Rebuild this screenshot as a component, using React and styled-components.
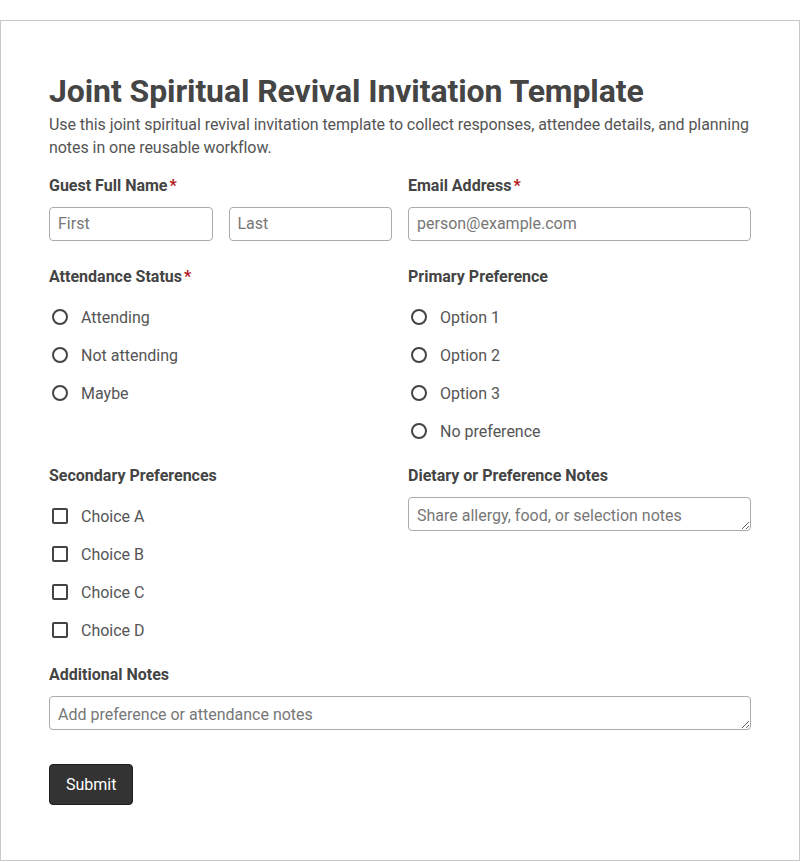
import React from "react";
import styled, { createGlobalStyle } from "styled-components";

const Global = createGlobalStyle`
  html, body { margin: 0; padding: 0; background: #fff; }
  body { font-family: Roboto, "Liberation Sans", Arial, sans-serif; }
  * { box-sizing: border-box; }
`;

const Page = styled.div`
  padding-top: 20px;
`;

const Card = styled.form`
  width: 800px;
  border: 1px solid #c8c8c8;
  padding: 51px 48px 55px 48px;
  background: #fff;
`;

const Title = styled.h1`
  margin: 0;
  font-size: 32px;
  line-height: 38px;
  font-weight: 700;
  letter-spacing: -0.1px;
  color: #454545;
`;

const Intro = styled.p`
  margin: 3px 0 17px 0;
  font-size: 16px;
  line-height: 23px;
  letter-spacing: -0.06px;
  color: #555;
`;

const Grid = styled.div`
  display: grid;
  grid-template-columns: 1fr 1fr;
  column-gap: 16px;
  row-gap: 24px;
`;

const Field = styled.div`
  display: flex;
  flex-direction: column;
  grid-column: ${(p) => (p.$full ? "1 / -1" : "auto")};
  margin-bottom: ${(p) => (p.$extra ? "2px" : "0")};
`;

const Label = styled.div`
  font-size: 16px;
  line-height: 20px;
  font-weight: 700;
  color: #444;
  margin-bottom: 11px;
`;

const Req = styled.span`
  color: #b3161c;
  margin-left: 2px;
`;

const Pair = styled.div`
  display: grid;
  grid-template-columns: 1fr 1fr;
  gap: 16px;
`;

const Input = styled.input`
  width: 100%;
  height: 34px;
  border: 1px solid #aaa;
  border-radius: 4px;
  padding: 0 8px 1px 8px;
  font-family: inherit;
  font-size: 16px;
  color: #333;
  &::placeholder { color: #777; }
`;

const Area = styled.textarea`
  display: block;
  width: 100%;
  height: 34px;
  min-height: 34px;
  border: 1px solid #aaa;
  border-radius: 4px;
  padding: 8px 8px 4px 8px;
  font-family: inherit;
  font-size: 16px;
  line-height: 20px;
  color: #333;
  resize: vertical;
  &::placeholder { color: #777; }
`;

const Options = styled.div`
  display: flex;
  flex-direction: column;
  gap: 16px;
  margin-top: 8px;
`;

const Option = styled.label`
  display: flex;
  align-items: center;
  height: 22px;
  gap: 13px;
  font-size: 16px;
  color: #555;
`;

const Mark = styled.span`
  width: 16px;
  height: 16px;
  margin-left: 3px;
  border: 2px solid #444;
  border-radius: ${(p) => (p.$round ? "50%" : "2px")};
  flex: none;
`;

const Submit = styled.button`
  align-self: flex-start;
  margin-top: 34px;
  height: 41px;
  padding: 0 16px;
  background: #333;
  color: #fff;
  border: 1px solid #1e1e1e;
  border-radius: 4px;
  font-family: inherit;
  font-size: 16px;
`;

const Choice = ({ round, children }) => (
  <Option>
    <Mark $round={round} />
    {children}
  </Option>
);

export default function App() {
  return (
    <Page>
      <Global />
      <Card onSubmit={(e) => e.preventDefault()}>
        <Title>Joint Spiritual Revival Invitation Template</Title>
        <Intro>
          Use this joint spiritual revival invitation template to collect responses, attendee details, and planning notes in one reusable workflow.
        </Intro>
        <Grid>
          <Field $extra>
            <Label>Guest Full Name<Req>*</Req></Label>
            <Pair>
              <Input placeholder="First" />
              <Input placeholder="Last" />
            </Pair>
          </Field>
          <Field $extra>
            <Label>Email Address<Req>*</Req></Label>
            <Input placeholder="person@example.com" />
          </Field>
          <Field>
            <Label>Attendance Status<Req>*</Req></Label>
            <Options>
              <Choice round>Attending</Choice>
              <Choice round>Not attending</Choice>
              <Choice round>Maybe</Choice>
            </Options>
          </Field>
          <Field>
            <Label>Primary Preference</Label>
            <Options>
              <Choice round>Option 1</Choice>
              <Choice round>Option 2</Choice>
              <Choice round>Option 3</Choice>
              <Choice round>No preference</Choice>
            </Options>
          </Field>
          <Field>
            <Label>Secondary Preferences</Label>
            <Options>
              <Choice>Choice A</Choice>
              <Choice>Choice B</Choice>
              <Choice>Choice C</Choice>
              <Choice>Choice D</Choice>
            </Options>
          </Field>
          <Field>
            <Label>Dietary or Preference Notes</Label>
            <Area rows={1} placeholder="Share allergy, food, or selection notes" />
          </Field>
          <Field $full>
            <Label>Additional Notes</Label>
            <Area rows={1} placeholder="Add preference or attendance notes" />
          </Field>
        </Grid>
        <Submit type="submit">Submit</Submit>
      </Card>
    </Page>
  );
}
